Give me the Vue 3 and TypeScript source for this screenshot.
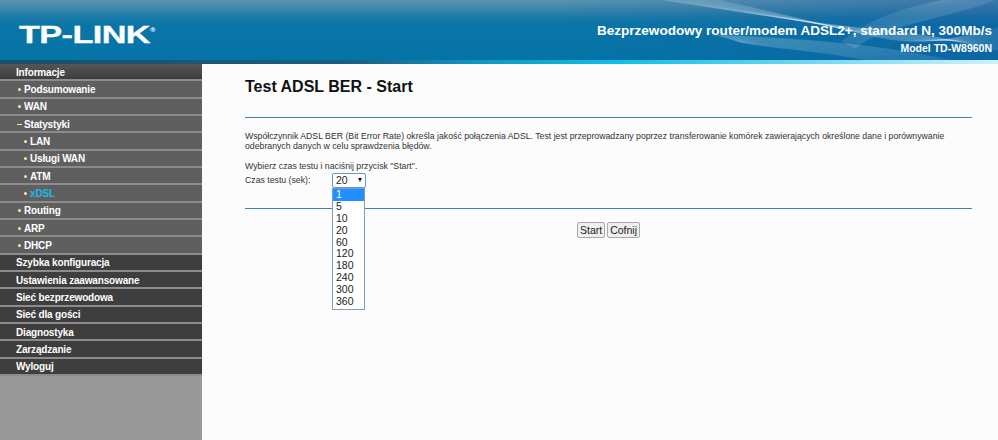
<script setup lang="ts">
interface MenuItem { label: string; level: 'top' | 'sub' | 'subsub'; marker?: string; active?: boolean; group?: boolean }
const menu: MenuItem[] = [
  { label: 'Informacje', level: 'top', group: true },
  { label: 'Podsumowanie', level: 'sub', marker: 'dot' },
  { label: 'WAN', level: 'sub', marker: 'dot' },
  { label: 'Statystyki', level: 'sub', marker: 'dash' },
  { label: 'LAN', level: 'subsub', marker: 'dot' },
  { label: 'Usługi WAN', level: 'subsub', marker: 'dot' },
  { label: 'ATM', level: 'subsub', marker: 'dot' },
  { label: 'xDSL', level: 'subsub', marker: 'dot', active: true },
  { label: 'Routing', level: 'sub', marker: 'dot' },
  { label: 'ARP', level: 'sub', marker: 'dot' },
  { label: 'DHCP', level: 'sub', marker: 'dot' },
  { label: 'Szybka konfiguracja', level: 'top' },
  { label: 'Ustawienia zaawansowane', level: 'top' },
  { label: 'Sieć bezprzewodowa', level: 'top' },
  { label: 'Sieć dla gości', level: 'top' },
  { label: 'Diagnostyka', level: 'top' },
  { label: 'Zarządzanie', level: 'top' },
  { label: 'Wyloguj', level: 'top' },
]
const options = ['1', '5', '10', '20', '60', '120', '180', '240', '300', '360']
const waves: string[] = []
for (let i = 0; i < 22; i++) {
  const k = i * 3
  // long swoop from the top edge down to the right edge
  waves.push(`M${662 + k * 0.9} 0 C ${730 + k} ${10 + k * 0.1}, ${800 + k * 0.6} ${22 + k * 0.1}, ${880} ${30 + k * 0.12} S ${960} ${44 - k * 0.1}, 998 ${50 - k * 0.35}`)
  // crossing band falling to the lower left
  waves.push(`M${944 + k * 0.8} 0 C ${900 + k * 0.8} ${8 + k * 0.15}, ${860 + k * 0.4} 24, ${842 + k * 0.2} ${42 + k * 0.1}`)
  // lower swoop into the strip
  waves.push(`M${716 + k * 0.4} ${35 + k * 0.12} C ${790} ${38 + k * 0.2}, ${880 - k} ${44 + k * 0.1}, ${948 - k * 1.3} 60`)
}
</script>

<template>
  <div class="page">
    <header class="banner">
      <svg class="art" viewBox="0 0 998 60" width="998" height="60" aria-hidden="true">
        <path v-for="(d, i) in waves" :key="i" :d="d" fill="none" stroke="#fff" stroke-opacity="0.17" stroke-width="0.6" />
      </svg>
      <div class="logo">TP-LINK<sup>®</sup></div>
      <div class="title">
        <div class="product">Bezprzewodowy router/modem ADSL2+, standard N, 300Mb/s</div>
        <div class="model">Model TD-W8960N</div>
      </div>
    </header>
    <div class="strip"></div>
    <div class="body">
      <nav class="side">
        <div
          v-for="item in menu"
          :key="item.label"
          class="row"
          :class="[item.level, { active: item.active, group: item.group }]"
        >
          <span v-if="item.marker" class="marker" :class="item.marker"></span>{{ item.label }}
        </div>
      </nav>
      <main class="content">
        <h1>Test ADSL BER - Start</h1>
        <hr class="rule first" />
        <p class="intro">Współczynnik ADSL BER (Bit Error Rate) określa jakość połączenia ADSL. Test jest przeprowadzany poprzez transferowanie komórek zawierających określone dane i porównywanie odebranych danych w celu sprawdzenia błędów.</p>
        <p class="hint">Wybierz czas testu i naciśnij przycisk "Start".</p>
        <div class="field">
          <span class="label">Czas testu (sek):</span>
          <div class="select">
            <div class="value">20<span class="caret"></span></div>
            <ul class="list">
              <li v-for="(o, i) in options" :key="o" :class="{ sel: i === 0 }">{{ o }}</li>
            </ul>
          </div>
        </div>
        <hr class="rule second" />
        <div class="actions">
          <button type="button">Start</button>
          <button type="button">Cofnij</button>
        </div>
      </main>
    </div>
  </div>
</template>

<style>
html, body { margin: 0; background: #fff; }
</style>

<style scoped>
.page { width: 998px; height: 440px; overflow: hidden; font-family: "Liberation Sans", Arial, sans-serif; }
.banner {
  position: relative; height: 60px; display: flex; justify-content: space-between; overflow: hidden;
  background: linear-gradient(180deg, #5a94b1 0%, #3f87aa 14%, #1a7ba7 28%, #0a76a7 40%, #0473a6 100%);
}
.banner::after {
  content: ""; position: absolute; inset: 0;
  background: linear-gradient(90deg, transparent 55%, rgba(20, 85, 160, 0.45) 100%);
}
.art { position: absolute; left: 0; top: 0; z-index: 1; }
.logo {
  position: relative; z-index: 2; margin: 23px 0 0 19px; height: 24px; line-height: 24px;
  font-size: 23px; font-weight: 700; color: #fff; transform: scaleX(1.49); transform-origin: left center;
  letter-spacing: -0.4px; white-space: nowrap; -webkit-text-stroke: 0.3px #fff;
}
.logo sup { font-size: 5px; line-height: 0; vertical-align: 11px; letter-spacing: 0; -webkit-text-stroke: 0; }
.title { position: relative; z-index: 2; text-align: right; padding: 22px 6px 0 0; color: #fff; font-weight: 700; }
.product { font-size: 13.55px; line-height: 17px; }
.model { font-size: 10.5px; line-height: 13px; margin-top: 3px; }
.strip { height: 4px; background: linear-gradient(90deg, #1a4f69 0, #1a5f80 350px, #0f97c6 480px, #11bfe4 620px, #7ddcf1 840px, #cdf1f9 998px); }
.body { display: flex; height: 376px; }
.side { width: 202px; flex: none; background: #999; }
.row {
  height: 17.33px; box-sizing: border-box; padding-top: 1px; line-height: 15px; font-size: 10px; font-weight: 700; color: #fff; white-space: nowrap;
  border-bottom: 2px solid #8c8c8c; display: flex; align-items: center; letter-spacing: -0.17px;
}
.row.top { background: #3e3e3e; padding-left: 16px; }
.row.group { background: linear-gradient(180deg, #555 0%, #3e3e3e 100%); }
.row.sub { background: #5f5f5f; padding-left: 18px; }
.row.subsub { background: #5f5f5f; padding-left: 24px; }
.row.active { color: #1cb9ea; }
.marker { display: inline-block; background: #f5ec9e; flex: none; margin-right: 3px; }
.marker.dot { width: 3px; height: 3px; border-radius: 50%; }
.marker.dash { width: 5px; height: 1px; margin-right: 2px; margin-left: -1px; }
.content { flex: 1; box-sizing: border-box; padding: 0 26px 0 43px; font-size: 8.73px; color: #333; background: #fcfcfc; }
h1 { margin: 14px 0 0; font-size: 16px; line-height: 18px; font-weight: 700; color: #111; }
.rule { border: 0; height: 1px; background: #3f85a8; margin: 0; }
.rule.first { margin-top: 21px; }
.intro { margin: 13px 0 0; line-height: 10px; }
.hint { margin: 10px 0 0; line-height: 10px; }
.field { display: flex; align-items: flex-start; margin-top: 4px; height: 27px; }
.label { width: 87px; line-height: 11px; }
.select { position: relative; z-index: 3; width: 34px; margin-top: -2px; }
.value {
  position: relative; box-sizing: border-box; height: 15px; width: 34px; border: 1px solid #5b9bd5; border-radius: 2px;
  background: #fff; font-size: 10.5px; line-height: 12px; padding-left: 3px; color: #222;
}
.caret { position: absolute; right: 3px; top: 4px; border-left: 2.5px solid transparent; border-right: 2.5px solid transparent; border-top: 4px solid #111; }
.list {
  position: absolute; left: 0; top: 15px; width: 33px; box-sizing: border-box; margin: 0; padding: 0 0 1px; list-style: none;
  background: #fff; border: 1px solid #7f9db9; font-size: 10.5px; color: #222;
}
.list li { height: 11.9px; line-height: 11px; padding-left: 3px; }
.list li.sel { background: #1e90ff; color: #fff; }
.rule.second { margin-top: 6px; }
.actions { display: flex; justify-content: center; gap: 2px; margin-top: 13px; }
button {
  height: 16px; padding: 0 2px; box-sizing: border-box; font: 10.5px/12px "Liberation Sans", Arial, sans-serif; color: #222;
  background: #efefef; border: 1px solid #a8a8a8; border-radius: 2px;
}
</style>
